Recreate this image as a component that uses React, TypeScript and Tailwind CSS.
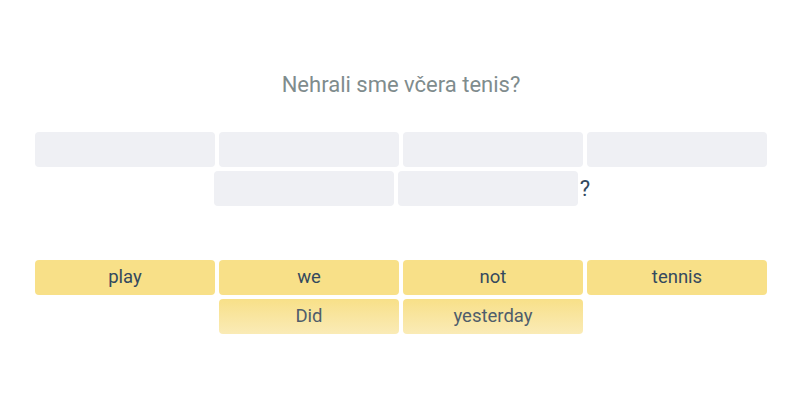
const SLOTS_ROW = [0, 1, 2, 3, 4, 5];

const WORDS = [
  { text: "play", fading: false },
  { text: "we", fading: false },
  { text: "not", fading: false },
  { text: "tennis", fading: false },
  { text: "Did", fading: true },
  { text: "yesterday", fading: true },
];

export default function App() {
  return (
    <div
      className="h-[400px] w-[800px] bg-white"
      style={{ fontFamily: "Roboto, 'Liberation Sans', sans-serif" }}
    >
      <div className="ml-[33px] w-[736px] pt-[71px]">
        <p className="text-center text-[22px] leading-[28px] text-[#7f8c8d]">
          Nehrali sme včera tenis?
        </p>

        <div className="mt-[31px] flex flex-wrap items-center justify-center">
          {SLOTS_ROW.map((i) => (
            <div key={i} className="m-[2px] h-[35px] w-[180px] rounded-[4px] bg-[#eff0f4]" />
          ))}
          <span className="text-[22px] leading-[26px] text-[#34495e]">?</span>
        </div>

        <div className="mt-[50px] flex flex-wrap justify-center">
          {WORDS.map((w) => (
            <div
              key={w.text}
              className={
                w.fading
                  ? "m-[2px] flex h-[35px] w-[180px] items-center justify-center rounded-[4px] bg-gradient-to-b from-[#f8e088] to-[#faebb6] text-[18.5px] text-[#4f5d6b]"
                  : "m-[2px] flex h-[35px] w-[180px] items-center justify-center rounded-[4px] bg-[#f8e088] text-[18.5px] text-[#34495e]"
              }
            >
              {w.text}
            </div>
          ))}
        </div>
      </div>
    </div>
  );
}
